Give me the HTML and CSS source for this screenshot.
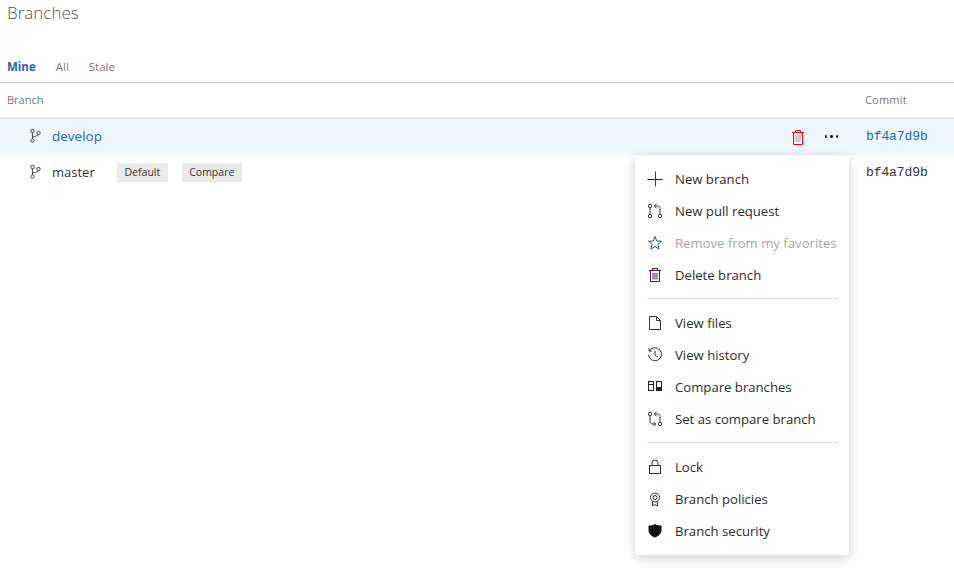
FILE: index.html
```html
<!DOCTYPE html>
<html lang="en">
<head>
<meta charset="utf-8">
<title>Branches</title>
<link rel="stylesheet" href="styles.css">
</head>
<body>
<svg class="defs" width="0" height="0" aria-hidden="true">
  <symbol id="i-branch" viewBox="0 0 16 16">
    <g fill="none" stroke="currentColor" stroke-width="1">
      <circle cx="4.500" cy="3" r="1.700"/><circle cx="4.500" cy="12.500" r="1.700"/><circle cx="10.500" cy="5" r="1.700"/>
      <path d="M4.500 4.700v6.100M4.500 10c0-2 5.500-1.500 6-3.300"/>
    </g>
  </symbol>
</svg>
<main class="page">
  <h1 class="title">Branches</h1>
  <nav class="tabs">
    <span class="tab tab-active">Mine</span>
    <span class="tab">All</span>
    <span class="tab">Stale</span>
  </nav>
  <div class="row head">
    <span class="head-branch">Branch</span>
    <span class="head-commit">Commit</span>
  </div>
  <div class="row branch selected">
    <svg class="branch-icon"><use href="#i-branch"/></svg>
    <a class="name link">develop</a>
    <span class="actions">
      <svg class="trash" viewBox="0 0 12 15"><g fill="none" stroke="#e0101c" stroke-width="1"><path d="M0 2.500h12M3.500 2.500V.5h5v2M1.500 2.500v12h9v-12"/><path d="M4 5v7M6 5v7M8 5v7" stroke="#e8858a"/></g></svg>
      <span class="dots"><i></i><i></i><i></i></span>
    </span>
    <a class="hash link">bf4a7d9b</a>
  </div>
  <div class="row branch">
    <svg class="branch-icon"><use href="#i-branch"/></svg>
    <span class="name name-plain">master</span>
    <span class="pill pill-default">Default</span>
    <span class="pill">Compare</span>
    <span class="hash">bf4a7d9b</span>
  </div>
</main>
<div class="menu">
  <div class="item"><svg class="ico" viewBox="0 0 16 16"><path d="M.5 8.500h15" stroke="#222"/><path d="M8.500 .5v15" stroke="#6a1b7d"/></svg>New branch</div>
  <div class="item"><svg class="ico" viewBox="0 0 16 16"><g fill="none" stroke="#333"><circle cx="3" cy="3" r="1.700"/><circle cx="3" cy="13" r="1.700"/><circle cx="13" cy="13" r="1.700"/><path d="M3 4.700v6.600M13 11.300V6c0-2-1-3-3-3H7.500M9.500 .8 7.300 3l2.200 2.200"/></g></svg>New pull request</div>
  <div class="item off"><svg class="ico" viewBox="0 0 16 16"><path d="M8 1.500l1.800 4.500 4.700.3-3.600 3 1.200 4.700L8 11.500l-4.100 2.500 1.200-4.700-3.600-3 4.700-.3z" fill="none" stroke="#2a4a7a"/></svg>Remove from my favorites</div>
  <div class="item"><svg class="ico" viewBox="0 0 16 16"><g fill="none" stroke="#4b1a5e"><path d="M2 3.500h12M5.500 3.500V1.500h5v2M3.500 3.500v11h9v-11M6 6v6.500M8 6v6.500M10 6v6.500"/></g></svg>Delete branch</div>
  <div class="sep"></div>
  <div class="item"><svg class="ico" viewBox="0 0 16 16"><path d="M2.500 1.500h7l4 4v9h-11zM9.500 1.500v4h4" fill="none" stroke="#333"/><path d="M2.500 1.500v13" stroke="#6a1b7d"/></svg>View files</div>
  <div class="item"><svg class="ico" viewBox="0 0 16 16"><g fill="none" stroke="#333"><path d="M2.500 3.700A6.500 6.500 0 1 1 1.500 8M2 1v3h3M8 4v4.500l3 1.500"/></g></svg>View history</div>
  <div class="item"><svg class="ico" viewBox="0 0 16 16"><rect x="1.500" y="2.500" width="5" height="9" fill="none" stroke="#222"/><rect x="9.500" y="2.500" width="5" height="9" fill="none" stroke="#222"/><rect x="9.500" y="8" width="5" height="3.500" fill="#222"/><path d="M1.500 5.500h5" stroke="#222"/></svg>Compare branches</div>
  <div class="item"><svg class="ico" viewBox="0 0 16 16"><g fill="none" stroke="#333"><circle cx="3" cy="3" r="1.700"/><circle cx="13" cy="13" r="1.700"/><path d="M3 4.700V10c0 2 1 3 3 3h2.500M6.500 10.800 8.700 13l-2.200 2.200M13 11.300V6c0-2-1-3-3-3H7.500M9.500 .8 7.300 3l2.200 2.200"/></g></svg>Set as compare branch</div>
  <div class="sep"></div>
  <div class="item"><svg class="ico" viewBox="0 0 16 16"><g fill="none" stroke="#333"><path d="M5 6.500V4a3 3 0 0 1 6 0v2.500"/><rect x="2.500" y="6.500" width="11" height="8" stroke="#4b1a5e"/></g></svg>Lock</div>
  <div class="item"><svg class="ico" viewBox="0 0 16 16"><g fill="none" stroke="#333"><circle cx="8" cy="6.500" r="4.500"/><circle cx="8" cy="6.500" r="2"/><path d="M5.500 10.500v4.500l2.500-1.500 2.500 1.500v-4.500"/></g></svg>Branch policies</div>
  <div class="item"><svg class="ico" viewBox="0 0 16 16"><path d="M1.500 2.500c2.800 0 5-.5 6.500-1.500 1.500 1 3.700 1.500 6.500 1.500v4.500c0 3.500-2.700 6-6.500 7.500-3.800-1.500-6.500-4-6.500-7.500z" fill="#111"/></svg>Branch security</div>
</div>
</body>
</html>
```

FILE: styles.css
```css
* { box-sizing: border-box; }
html, body { margin: 0; height: 100%; overflow: hidden; }
body { background: #fff; color: #333; font-family: "Open Sans", "Noto Sans", sans-serif; position: relative; }
.defs { position: absolute; }
.page { display: flex; flex-direction: column; }
.title { margin: 0; height: 50px; padding: 2px 0 0 7px; font-size: 17px; line-height: 22px; font-weight: 300; color: #555; }
.tabs { display: flex; gap: 20px; height: 33px; padding: 8px 0 0 7px; border-bottom: 1px solid #c8c8c8; font-size: 11.500px; line-height: 18px; color: #777; }
.tab-active { color: #2b5fb4; font-weight: 700; }
.row { display: flex; align-items: center; padding-left: 7px; }
.head { height: 36px; border-bottom: 2px solid #eaeaea; font-size: 11px; color: #777; padding-bottom: 2px; }
.head-commit { margin-left: auto; margin-right: 47px; letter-spacing: .25px; }
.branch { height: 36px; padding-left: 28px; padding-bottom: 2px; font-size: 13.500px; }
.selected { background: #eff6fc; }
.branch-icon { width: 16px; height: 16px; color: #444; flex: none; margin-right: 8px; }
.name { width: 65px; flex: none; }
.name-plain { font-size: 13px; }
.link { color: #106ebe; }
.pill { background: #eaeaea; color: #333; font-size: 10.500px; height: 19px; line-height: 19px; padding: 0 7.500px; }
.pill-default { margin-right: 14px; }
.actions { margin-left: auto; display: flex; align-items: center; gap: 21px; margin-right: 28px; }
.trash { width: 12px; height: 15px; margin-top: 3px; }
.dots { display: flex; gap: 3px; margin-top: 1px; }
.dots i { width: 2.500px; height: 2.500px; background: #222; border-radius: 50%; }
.hash { font-family: "Liberation Mono", monospace; font-size: 13px; width: 88px; flex: none; letter-spacing: -.1px; }
.branch:not(.selected) .hash { margin-left: auto; }
.menu { position: absolute; left: 635px; top: 155px; width: 214px; height: 400px; padding: 8px 0; background: #fff; border-radius: 3px; box-shadow: 0 3px 12px rgba(0,0,0,.2); font-size: 13.150px; color: #2b2b2b; }
.item { display: flex; align-items: center; height: 32px; padding-left: 12px; white-space: nowrap; }
.ico { width: 16px; height: 16px; flex: none; margin-right: 12px; }
.off { color: #a6a6a6; }
.sep { height: 1px; margin: 7px 11px 8px 12px; background: #e3e3e3; }
```
